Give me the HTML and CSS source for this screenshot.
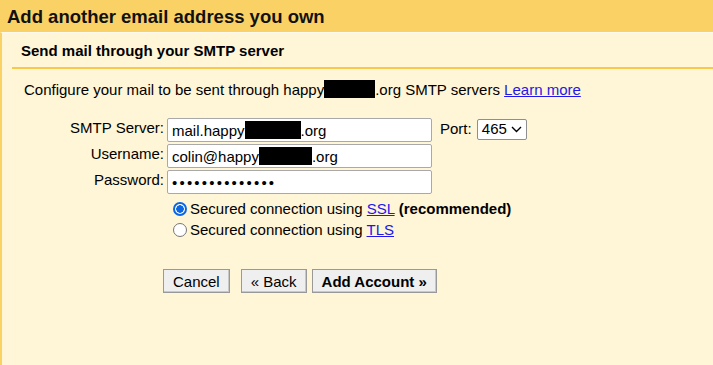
FILE: index.html
```html
<!DOCTYPE html>
<html lang="en">
<head>
    <meta charset="UTF-8">
    <title>Add another email address you own</title>
    <link rel="stylesheet" href="styles.css">
</head>
<body>
    <div class="header">Add another email address you own</div>
    <div class="panel">
        <div class="subheader">Send mail through your SMTP server</div>
        <div class="content">
            <p class="intro">Configure your mail to be sent through happy<span class="redact r-intro"></span>.org SMTP servers <a href="#">Learn more</a></p>

            <table class="form">
                <tr>
                    <td class="label">SMTP Server:</td>
                    <td><div class="field">mail.happy<span class="redact r-server"></span>.org</div></td>
                    <td class="port">Port: <span class="select">465 <svg width="11" height="7" viewBox="0 0 11 7"><path d="M1 1l4.5 4.5L10 1" fill="none" stroke="#000" stroke-width="1.4"/></svg></span></td>
                </tr>
                <tr>
                    <td class="label">Username:</td>
                    <td><div class="field">colin@happy<span class="redact r-user"></span>.org</div></td>
                    <td></td>
                </tr>
                <tr>
                    <td class="label">Password:</td>
                    <td><div class="field dots">••••••••••••••</div></td>
                    <td></td>
                </tr>
            </table>

            <div class="options">
                <label class="option"><span class="radio checked"></span><span>Secured connection using <a href="#">SSL</a> <b>(recommended)</b></span></label>
                <label class="option"><span class="radio"></span><span>Secured connection using <a href="#">TLS</a></span></label>
            </div>

            <div class="buttons">
                <button class="btn">Cancel</button>
                <button class="btn back">« Back</button>
                <button class="btn primary">Add Account »</button>
            </div>
        </div>
    </div>
</body>
</html>
```

FILE: styles.css
```css
body {
    margin: 0;
    font-family: "Liberation Sans", Arial, sans-serif;
    font-size: 15px;
    color: #000;
    background-color: #fff5d7;
    height: 365px;
    overflow: hidden;
}
.header {
    background-color: #fad165;
    height: 32px;
    line-height: 33px;
    padding-left: 7px;
    font-size: 18.5px;
    font-weight: bold;
    color: #111;
}
.panel {
    border-left: 2px solid #fad165;
    border-top: 1px solid #fffaf0;
    height: 340px;
}
.subheader {
    font-weight: bold;
    font-size: 15px;
    padding: 9px 0 0 9px;
    height: 25px;
    margin-left: 10px;
    border-bottom: 2px solid #f8c94f;
}
.content {
    padding-left: 22px;
}
.intro {
    margin: 0;
    padding-top: 11px;
    height: 38px;
}
a {
    color: #2218e6;
}
.redact {
    display: inline-block;
    background-color: #000;
    height: 18px;
    vertical-align: -3px;
}
.r-intro { width: 51px; }
.r-server { width: 56px; }
.r-user { width: 53px; }
.form {
    border-collapse: collapse;
}
.form td {
    padding: 0 0 2px 0;
}
.label {
    width: 140px;
    text-align: right;
    padding-right: 3px !important;
    vertical-align: top;
    line-height: 20px;
}
.field {
    box-sizing: border-box;
    width: 265px;
    height: 24px;
    background-color: #fff;
    border: 1px solid #a9a9a9;
    border-radius: 2px;
    padding: 2px 4px 0;
    line-height: 20px;
    white-space: nowrap;
}
.dots {
    font-size: 15px;
    letter-spacing: 2.2px;
}
.port {
    padding-left: 8px !important;
    vertical-align: top;
    line-height: 22px;
}
.select {
    display: inline-flex;
    align-items: center;
    gap: 4px;
    box-sizing: border-box;
    height: 21px;
    margin-left: 1px;
    padding: 0 4px;
    background-color: #fff;
    border: 1px solid #8f8f8f;
    border-radius: 2px;
}
.options {
    margin-left: 148px;
    margin-top: 2px;
}
.option {
    display: flex;
    align-items: center;
    height: 21px;
}
.radio {
    box-sizing: border-box;
    width: 14px;
    height: 14px;
    border-radius: 50%;
    border: 1px solid #767676;
    background-color: #fff;
    margin: 0 3px 0 1px;
}
.radio.checked {
    border: 2px solid #0b66e4;
    background: radial-gradient(circle, #0b66e4 0 3.5px, #fff 4px);
}
.buttons {
    margin-left: 139px;
    margin-top: 29px;
    display: flex;
}
.btn {
    font-family: "Liberation Sans", Arial, sans-serif;
    font-size: 15px;
    height: 24px;
    padding: 0 9px;
    background-color: #efefef;
    border: 1px solid #999;
    box-shadow: inset -1px -1px 0 #c8c8c8;
    color: #000;
}
.back {
    margin-left: 11px;
}
.primary {
    margin-left: 5px;
    font-weight: bold;
}
```
